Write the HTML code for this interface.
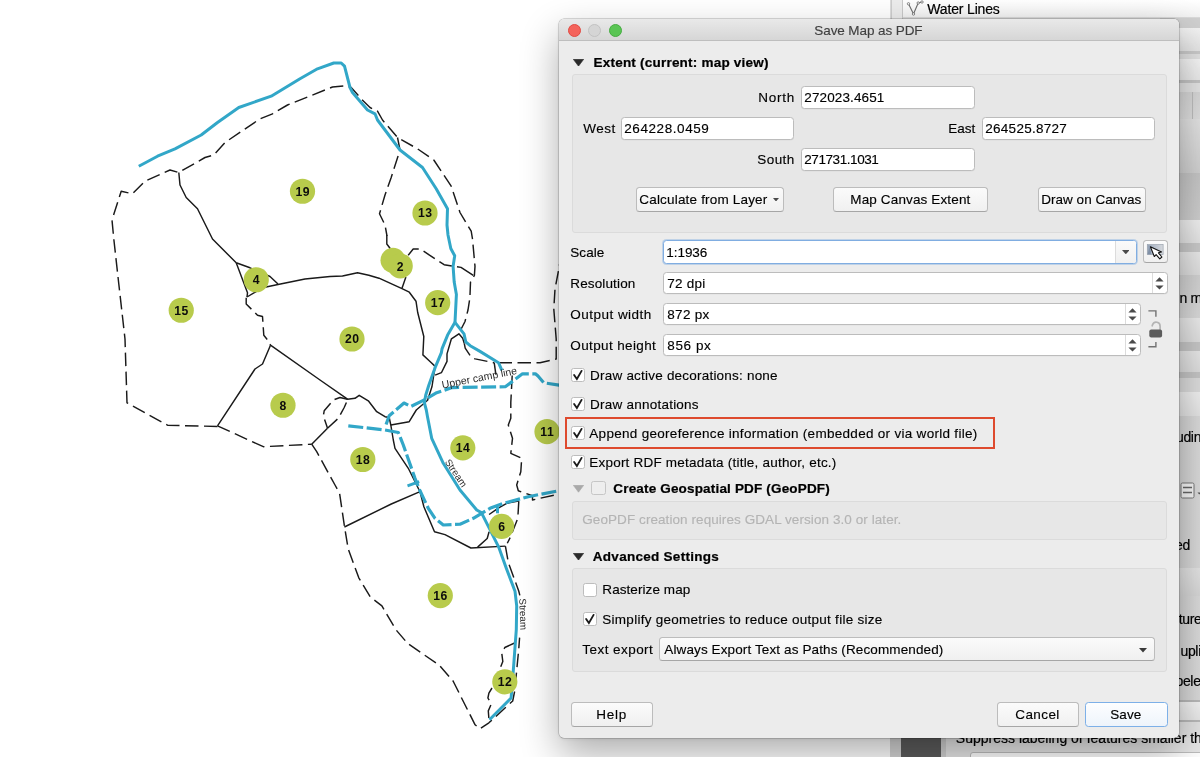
<!DOCTYPE html>
<html><head><meta charset="utf-8"><title>Save Map as PDF</title>
<style>
html,body{margin:0;padding:0;}
body{width:1200px;height:757px;overflow:hidden;background:#fff;position:relative;font-family:"Liberation Sans",sans-serif;font-size:13px;color:#1c1c1c;}
.abs{position:absolute;}
#wrap{position:absolute;left:0;top:0;width:1200px;height:757px;overflow:hidden;will-change:transform;}
.map{position:absolute;left:0;top:0;}
.bgt{position:absolute;white-space:nowrap;font-size:14px;line-height:16px;color:#000;-webkit-text-stroke-width:0.2px;}
#dlg{position:absolute;left:559px;top:19px;width:620px;height:719px;background:#ececec;border-radius:5px 5px 5px 5px;
 box-shadow:0 0 0 0.5px rgba(0,0,0,0.28), 0 16px 38px 0 rgba(0,0,0,0.32), 0 1px 4px rgba(0,0,0,0.08);}
#dlg .titlebar{position:absolute;left:0;top:0;width:620px;height:20.8px;border-radius:5px 5px 0 0;background:linear-gradient(#e9e9e9,#d6d6d6);border-bottom:1px solid #bebebe;}
#dlg .tl{position:absolute;width:11.2px;height:11.2px;border-radius:50%;border:0.5px solid;}
#dlg > *{position:absolute;}
.tx{white-space:nowrap;line-height:16px;height:16px;font-size:13.5px;color:#000;-webkit-text-stroke-width:0.14px;}
.tx[style*=bold]{-webkit-text-stroke-width:0.22px;}
.gb{box-sizing:border-box;background:#e7e7e7;border:1px solid #dbdbdb;border-radius:3px;}
.inp{box-sizing:border-box;background:#fff;border:1px solid #bcbcbc;border-radius:3.5px;box-shadow:0 0.5px 0 rgba(0,0,0,0.05);}
.inp.focus{border:1.5px solid #80ade1;box-shadow:0 0 0 1px rgba(128,173,225,0.42);}
.btn{box-sizing:border-box;background:linear-gradient(#fbfbfb,#f0f0f0);border:1px solid #bcbcbc;border-bottom-color:#a6a6a6;border-radius:3.5px;}
.btn.def{border:1.5px solid #7db0e8;background:linear-gradient(#fdfeff,#eef4fb);}
.cb{box-sizing:border-box;width:14px;height:14px;background:#fff;border:1px solid #bdbdbd;border-radius:2.5px;}
.cb.dis{background:#eeeeee;border-color:#c6c6c6;width:15px;height:14.5px;}
.cb .ck{position:absolute;left:-1px;top:-1px;width:14px;height:14px;}
.red{box-sizing:border-box;border:2.5px solid #de4a2e;background:transparent;}
.cbseg{position:absolute;right:0;top:0;bottom:0;width:20px;background:linear-gradient(#fafafa,#f0f0f0);border-radius:0 2px 2px 0;}
.cbsep{position:absolute;right:20px;top:0;bottom:0;width:1px;background:#dcdcdc;}
.spsep{position:absolute;right:13.5px;top:0;bottom:0;width:1px;background:#dcdcdc;}
</style></head>
<body><div id="wrap">
<svg class="map" width="600" height="757" viewBox="0 0 600 757">
<g fill="none" stroke="#1a1a1a" stroke-width="1.45" stroke-linejoin="round" stroke-linecap="butt">
<path d="M178.8,172.5 L180.0,185.0 L186.2,197.5 L197.5,208.8 L212.5,239.0 L236.2,262.8"/>
<path d="M236.2,262.8 L250.0,267.8 L270.0,276.5 L278.0,284.0"/>
<path d="M236.2,262.8 L247.5,292.8 L247.0,297.0"/>
<path d="M247.0,297.0 L262.5,287.8 L278.0,284.5 L305.0,279.0 L330.0,276.5 L342.5,276.0 L357.5,272.8 L368.8,275.2 L379.0,278.2 L402.0,288.7 L409.3,292.2 L416.0,301.2 L417.7,312.5 L423.8,336.5 L422.9,354.9 L430.0,361.5 L434.9,366.1"/>
<path d="M457.0,266.8 L461.0,267.4 L473.3,275.4"/>
<path d="M405.9,277.1 L402.0,288.3"/>
<path d="M386.8,235.0 L386.8,244.0 L390.2,248.5"/>
<path d="M270.5,345.2 L262.5,364.0 L255.0,369.0 L217.5,425.8"/>
<path d="M270.5,345.2 L320.0,380.0 L347.5,399.2 L355.0,398.3 L359.2,395.3 L368.3,400.8 L376.7,411.7 L385.0,416.7 L389.2,417.5 L390.8,425.0 L393.3,440.0 L395.0,448.3 L408.3,468.3 L420.0,491.7 L423.9,506.8 L434.5,531.8 L445.0,534.6 L470.9,548.0 L505.4,546.1"/>
<path d="M390.8,425.0 L409.2,421.7 L416.3,410.0 L427.6,400.3 L432.0,386.5 L434.5,370.2 L434.7,366.2"/>
<path d="M311.7,444.2 L327.5,428.3"/>
<path d="M344.4,527.0 L391.3,504.0 L420.0,491.7"/>
<path d="M477.6,547.1 L487.2,538.5 L489.1,531.8"/>
<path d="M489.1,514.5 L498.7,507.8 L506.7,503.3 L518.3,501.0"/>
<path d="M435.1,375.2 L441.4,372.7 L447.0,361.4 L447.0,353.9 L451.4,338.8 L458.9,333.8 L462.7,338.2 L464.3,343.5"/>
<path d="M494.2,362.7 L495.9,374.7"/>
</g>
<g fill="none" stroke="#1a1a1a" stroke-width="1.45" stroke-dasharray="13.5 5.5" stroke-linejoin="round">
<path d="M217.5,426.5 L167.5,425.2 L127.0,402.8 L125.0,339.0 L118.8,284.0 L113.8,239.0 L112.0,220.0 L121.2,191.2 L132.5,193.8 L145.0,181.2 L170.0,170.0 L178.8,172.5 L205.0,157.5 L213.8,155.0 L225.0,142.5 L260.0,118.8 L272.5,113.8 L287.5,105.0 L332.5,87.0 L346.2,85.8 L351.2,87.5 L361.2,98.8 L370.0,107.5 L377.5,111.2 L382.5,120.0 L397.5,137.5 L417.5,148.8 L433.8,160.0 L451.2,186.2 L460.0,212.5 L471.2,231.2 L472.5,239.0 L475.0,266.4 L474.4,275.4 L470.5,282.1 L469.9,297.9 L468.0,310.0 L465.0,321.5 L461.2,329.0"/>
<path d="M397.5,137.5 L400.0,150.0 L391.2,177.5 L385.0,195.0 L379.5,213.8 L385.0,225.0 L387.0,236.0"/>
<path d="M408.2,255.2 L413.2,249.0 L420.5,249.0 L429.5,255.2 L444.1,264.7 L455.0,266.6"/>
<path d="M246.2,297.8 L246.2,304.0 L257.5,315.2 L262.5,316.5 L263.8,335.2 L268.8,341.5 L270.5,345.2"/>
<path d="M217.5,425.8 L263.3,446.7 L311.7,444.2"/>
<path d="M327.5,428.3 L338.3,418.3 L344.2,407.5 L347.5,400.0"/>
<path d="M347.5,399.2 L340.0,397.5 L333.3,400.0 L324.2,410.8 L323.3,415.8 L326.7,425.8 L327.5,428.3"/>
<path d="M311.7,444.2 L316.7,451.7 L335.0,485.0 L339.6,493.4 L344.4,526.0 L348.2,549.0 L358.8,577.8 L370.3,596.9 L381.9,605.9 L395.8,629.6 L407.7,643.5 L439.4,665.3 L453.2,681.2 L465.1,705.0 L475.1,724.8 L480.0,728.7 L488.9,722.8 L512.7,701.0 L514.7,691.1 L518.7,649.5 L519.6,637.6"/>
<path d="M515.7,642.5 L504.8,647.5 L501.8,653.4 L502.8,661.4 L499.8,669.3"/>
<path d="M492.0,688.0 L488.9,693.1 L487.9,698.0 L491.3,704.0 L488.3,710.9 L488.9,718.8"/>
<path d="M505.4,546.1 L508.3,562.4 L518.8,591.2 L521.0,600.0"/>
<path d="M518.8,501.1 L517.8,518.3 L510.2,537.5 L507.3,543.3"/>
<path d="M512.2,375.5 L510.8,402.5 L510.8,418.3 L508.3,425.0 L512.5,438.3 L510.8,453.3 L521.7,458.3 L520.8,471.7 L516.7,485.0 L518.3,490.8 L532.5,495.8 L532.5,500.0 L558.3,494.2 L580.0,490.0"/>
<path d="M464.3,343.5 L465.2,348.2 L471.5,357.7 L475.2,358.9 L494.2,362.7"/>
<path d="M498.5,362.7 L540.0,362.8 L556.2,359.0 L556.2,339.0 L553.8,309.0 L555.0,289.0 L558.8,269.0 L560.0,262.0"/>
</g>
<g fill="none" stroke="#32a7c8" stroke-width="3" stroke-linejoin="round" stroke-linecap="butt">
<path d="M138.8,166.2 L157.5,156.2 L175.0,148.8 L201.2,135.0 L217.5,122.5 L238.8,107.5 L271.2,96.2 L300.0,78.8 L317.5,68.8 L333.8,63.0 L341.2,63.0 L344.5,66.2 L350.0,87.5 L352.5,92.5 L367.5,110.0 L375.0,113.8 L377.5,120.0 L400.0,150.0 L422.5,167.5 L436.2,188.8 L447.5,208.8 L447.0,225.0 L448.0,235.0 L450.8,248.5 L454.7,255.8 L453.1,266.4 L454.2,282.1 L456.4,294.5 L455.0,322.3"/>
<path d="M455.0,322.3 L447.6,335.1 L442.0,348.9 L441.4,352.6 L435.1,367.7 L428.8,385.3 L425.7,395.3 L424.4,402.8 L426.3,410.0 L427.5,416.7 L431.7,438.3 L443.3,463.3 L460.0,490.0 L476.7,510.0 L481.4,512.6 L489.1,527.9 L498.7,547.1 L506.3,568.2 L515.0,591.2 L516.7,605.9 L516.3,629.6 L513.7,665.3 L511.1,698.0 L489.5,719.8"/>
<path d="M455.0,322.3 L464.0,333.8 L465.8,342.0 L470.2,345.7 L480.0,351.4 L498.5,362.7 L501.9,370.4"/>
<path d="M407.5,485.8 L419.2,481.7"/>
<path d="M497.5,506.7 L497.5,513.3"/>
</g>
<g fill="none" stroke="#32a7c8" stroke-width="3.2" stroke-dasharray="15 3.5" stroke-linejoin="round">
<path d="M580.0,388.0 L559.0,385.2 L543.8,382.8 L538.0,376.0 L535.4,373.8 L522.5,373.8 L505.3,386.7 L452.1,387.6 L436.7,392.7 L425.0,399.6 L410.9,406.4 L404.0,403.0 L389.2,415.8 L385.0,427.5"/>
<path d="M348.3,425.8 L385.0,430.0 L398.3,432.5 L403.3,445.0 L415.0,478.3 L420.0,490.8 L428.3,508.3 L435.0,518.3 L443.3,525.0 L460.0,524.2 L473.3,518.3 L490.0,508.3 L503.3,503.3 L528.3,496.7 L558.3,490.8 L580.0,487.0"/>
</g>
<g font-family="Liberation Sans, sans-serif" font-size="10.5" fill="#2a2a2a">
<text transform="translate(442.5,388.5) rotate(-11)">Upper camp line</text>
<text font-size="9.7" transform="translate(444.5,462) rotate(56)">Stream</text>
<text font-size="9.8" transform="translate(519.3,598.6) rotate(88)">Stream</text>
</g>
<g fill="#b8cb4c">
<circle cx="393" cy="260.3" r="12.5"/><circle cx="400.3" cy="265.9" r="12.5"/>
<circle cx="302.5" cy="191.25" r="12.6"/>
<circle cx="425" cy="213" r="12.6"/>
<circle cx="181.25" cy="310.25" r="12.6"/>
<circle cx="256.25" cy="279.75" r="12.6"/>
<circle cx="352" cy="339" r="12.6"/>
<circle cx="283" cy="405.25" r="12.6"/>
<circle cx="437.7" cy="302.7" r="12.6"/>
<circle cx="362.8" cy="459.5" r="12.6"/>
<circle cx="462.8" cy="447.8" r="12.6"/>
<circle cx="547" cy="431.7" r="12.6"/>
<circle cx="501.6" cy="526.4" r="12.6"/>
<circle cx="440.3" cy="595.6" r="12.6"/>
<circle cx="504.8" cy="681.8" r="12.6"/>
</g>
<g font-family="Liberation Sans, sans-serif" font-size="12.2" font-weight="bold" fill="#0c0c0c" text-anchor="middle" letter-spacing="0.5">
<text x="400.5" y="270.8">2</text>
<text x="302.75" y="195.7">19</text>
<text x="425.25" y="217.4">13</text>
<text x="181.5" y="314.6">15</text>
<text x="256.5" y="284.1">4</text>
<text x="352.25" y="343.4">20</text>
<text x="283.25" y="409.6">8</text>
<text x="437.95" y="307.1">17</text>
<text x="363.05" y="463.9">18</text>
<text x="463.05" y="452.2">14</text>
<text x="547.25" y="436.1">11</text>
<text x="501.85" y="530.8">6</text>
<text x="440.55" y="600.0">16</text>
<text x="505.05" y="686.2">12</text>
</g>
</svg>
<div class="abs" style="left:890px;top:0;width:310px;height:757px;background:#dcdcdc"></div>
<div class="abs" style="left:891px;top:0;width:9.5px;height:20px;background:#ececec;border-left:1px solid #cdcdcd;border-right:1px solid #c8c8c8"></div>
<div class="abs" style="left:903px;top:0;width:297px;height:17px;background:linear-gradient(#fff,#f2f2f2);border-bottom:1px solid #d9d9d9"></div>
<svg class="abs" style="left:906px;top:0" width="18" height="17" viewBox="0 0 18 17"><path d="M2.5,3.8 L7.5,14 L12.2,3 L16,2" fill="none" stroke="#6c6c6c" stroke-width="1.1"/><circle cx="2.5" cy="3.8" r="1.2" fill="#fff" stroke="#6c6c6c" stroke-width="0.8"/><circle cx="7.5" cy="14" r="1.2" fill="#fff" stroke="#6c6c6c" stroke-width="0.8"/><circle cx="12.2" cy="3" r="1.2" fill="#fff" stroke="#6c6c6c" stroke-width="0.8"/><circle cx="16" cy="2" r="1.2" fill="#fff" stroke="#6c6c6c" stroke-width="0.8"/></svg>
<span class="bgt" id="b_wl" style="left:927.3px;top:1.1px;letter-spacing:-0.16px">Water Lines</span>
<div class="abs" style="left:1160px;top:18px;width:40px;height:10px;background:#cfcfcf"></div>
<div class="abs" style="left:1160px;top:28px;width:40px;height:23px;background:linear-gradient(#f2f2f2,#e4e4e4)"></div>
<div class="abs" style="left:1160px;top:51px;width:40px;height:3px;background:#c9c9c9"></div>
<div class="abs" style="left:1160px;top:54px;width:40px;height:5px;background:#e0e0e0"></div>
<div class="abs" style="left:1160px;top:59px;width:40px;height:21px;background:linear-gradient(#f4f4f4,#e9e9e9)"></div>
<div class="abs" style="left:1160px;top:80px;width:40px;height:3px;background:#c4c4c4"></div>
<div class="abs" style="left:1160px;top:83px;width:40px;height:9px;background:#e3e3e3"></div>
<div class="abs" style="left:1160px;top:92px;width:40px;height:27px;background:linear-gradient(#d6d6d6,#dedede)"></div>
<div class="abs" style="left:1160px;top:119px;width:40px;height:54px;background:linear-gradient(#e2e2e2,#cfcfcf)"></div>
<div class="abs" style="left:1160px;top:173px;width:40px;height:47px;background:linear-gradient(#c4c4c4,#cdcdcd)"></div>
<div class="abs" style="left:1160px;top:220px;width:40px;height:23px;background:linear-gradient(#efefef,#e2e2e2)"></div>
<div class="abs" style="left:1160px;top:243px;width:40px;height:9px;background:#c8c8c8"></div>
<div class="abs" style="left:1160px;top:252px;width:40px;height:23px;background:linear-gradient(#e8e8e8,#dcdcdc)"></div>
<div class="abs" style="left:1160px;top:275px;width:40px;height:43px;background:linear-gradient(#d0d0d0,#d8d8d8)"></div>
<div class="abs" style="left:1160px;top:318px;width:40px;height:24px;background:linear-gradient(#eaeaea,#dedede)"></div>
<div class="abs" style="left:1160px;top:342px;width:40px;height:9px;background:#c6c6c6"></div>
<div class="abs" style="left:1160px;top:351px;width:40px;height:21px;background:linear-gradient(#e6e6e6,#dcdcdc)"></div>
<div class="abs" style="left:1160px;top:372px;width:40px;height:6px;background:#c4c4c4"></div>
<div class="abs" style="left:1160px;top:378px;width:40px;height:14px;background:#dbdbdb"></div>
<div class="abs" style="left:1160px;top:392px;width:40px;height:24px;background:linear-gradient(#efefef,#e3e3e3)"></div>
<div class="abs" style="left:1160px;top:416px;width:40px;height:152px;background:linear-gradient(90deg,#cfcfcf,#d9d9d9)"></div>
<div class="abs" style="left:1160px;top:568px;width:40px;height:28px;background:linear-gradient(#e3e3e3,#d6d6d6)"></div>
<div class="abs" style="left:1160px;top:596px;width:40px;height:104px;background:linear-gradient(90deg,#d0d0d0,#dadada)"></div>
<div class="abs" style="left:1160px;top:700px;width:40px;height:2px;background:#b9b9b9"></div>
<div class="abs" style="left:1160px;top:702px;width:40px;height:18px;background:linear-gradient(#f3f3f3,#e7e7e7)"></div>
<div class="abs" style="left:1160px;top:720px;width:40px;height:2px;background:#b9b9b9"></div>
<div class="abs" style="left:1160px;top:722px;width:40px;height:35px;background:#e2e2e2"></div>
<div class="abs" style="left:1192px;top:92px;width:1px;height:27px;background:#bdbdbd"></div>
<span class="bgt" style="left:1179.5px;top:290px;letter-spacing:-0.35px">n m</span>
<span class="bgt" style="left:1176px;top:429.2px;letter-spacing:-0.35px">udin</span>
<span class="bgt" style="left:1175px;top:536.7px;letter-spacing:-0.35px">ed</span>
<span class="bgt" style="left:1178.8px;top:611.4px;letter-spacing:-0.35px">ture</span>
<span class="bgt" style="left:1180.5px;top:642.5px;letter-spacing:-0.35px">upli</span>
<span class="bgt" style="left:1175.5px;top:672.6px;letter-spacing:-0.35px">bele</span>
<svg class="abs" style="left:1180px;top:481.5px" width="21" height="18" viewBox="0 0 21 18"><rect x="1" y="1" width="13" height="15" rx="1.5" fill="#f4f4f4" stroke="#777" stroke-width="1"/><path d="M3,5.5 H12 M3,10.5 H12" stroke="#666" stroke-width="1.6"/><path d="M17.5,10.5 L21,10.5 L19.3,12.5 Z" fill="#555"/></svg>
<div class="abs" style="left:890px;top:738px;width:11px;height:19px;background:#d4d4d4"></div>
<div class="abs" style="left:901px;top:738px;width:40px;height:19px;background:#5c5c5c"></div>
<div class="abs" style="left:941px;top:738px;width:5px;height:19px;background:#d0d0d0"></div>
<div class="abs" style="left:946px;top:738px;width:254px;height:19px;background:#e6e6e6"></div>
<span class="bgt" id="b_sup" style="left:955.8px;top:729.6px;letter-spacing:0.005px">Suppress labeling of features smaller th</span>
<div class="abs" style="left:970px;top:752px;width:240px;height:10px;background:#fff;border:1px solid #bdbdbd;border-radius:3px"></div>
<div id="dlg">
<div class="titlebar"></div>
<div class="tl" style="left:8.6px;top:4.9px;background:#f4635b;border-color:#e14a42"></div>
<div class="tl" style="left:29.0px;top:4.9px;background:#d5d5d5;border-color:#c2c2c2"></div>
<div class="tl" style="left:49.8px;top:4.9px;background:#5ac554;border-color:#45ac40"></div>
<div class="gb" style="left:13px;top:55px;width:595px;height:159px;"></div>
<div class="gb" style="left:13px;top:481.5px;width:595px;height:39.0px;"></div>
<div class="gb" style="left:13px;top:548.5px;width:595px;height:104.5px;"></div>
<svg class="abs" style="left:14px;top:39.5px" width="11" height="7.5" viewBox="0 0 11 7.5"><path d="M0.3,0.3 L10.7,0.3 L5.5,7.2 Z" fill="#2a2a2a" stroke="#2a2a2a" stroke-width="0.6" stroke-linejoin="round"/></svg>
<svg class="abs" style="left:14px;top:466px" width="11" height="7.5" viewBox="0 0 11 7.5"><path d="M0.3,0.3 L10.7,0.3 L5.5,7.2 Z" fill="#a9a9a9" stroke="#a9a9a9" stroke-width="0.6" stroke-linejoin="round"/></svg>
<svg class="abs" style="left:14px;top:533.5px" width="11" height="7.5" viewBox="0 0 11 7.5"><path d="M0.3,0.3 L10.7,0.3 L5.5,7.2 Z" fill="#2a2a2a" stroke="#2a2a2a" stroke-width="0.6" stroke-linejoin="round"/></svg>
<div class="inp" style="left:242px;top:66.5px;width:174px;height:23.5px;"></div>
<div class="inp" style="left:62px;top:97.5px;width:173px;height:23.5px;"></div>
<div class="inp" style="left:423px;top:97.5px;width:173px;height:23.5px;"></div>
<div class="inp" style="left:242px;top:128.5px;width:174px;height:23.5px;"></div>
<div class="btn" style="left:77px;top:168px;width:148px;height:24.5px;"><svg class="abs" style="right:4.4px;top:9.6px" width="6" height="3.6" viewBox="0 0 6 3.6"><path d="M0,0 L6,0 L3,3.5 Z" fill="#4a4a4a"/></svg></div>
<div class="btn" style="left:274px;top:168px;width:155px;height:24.5px;"></div>
<div class="btn" style="left:479px;top:168px;width:108px;height:24.5px;"></div>
<div class="inp focus" style="left:104px;top:221px;width:474px;height:24px;"><div class="cbseg"></div><div class="cbsep"></div><svg class="abs" style="right:6.6px;top:8.6px" width="7.6" height="4.4" viewBox="0 0 7.6 4.4"><path d="M0,0 L7.6,0 L3.8,4.3 Z" fill="#4a4a4a"/></svg></div>
<div class="btn" style="left:584.3px;top:221px;width:24.40000000000009px;height:23px;overflow:hidden"><svg class="abs" style="left:0;top:0" width="24" height="23" viewBox="1144.3 241 24 23">
<defs><linearGradient id="mg" x1="0" x2="1" y1="0" y2="0"><stop offset="0" stop-color="#8e9db3"/><stop offset="0.25" stop-color="#a9b4c4"/><stop offset="1" stop-color="#d6d9dd"/></linearGradient></defs>
<rect x="1147.6" y="244.6" width="15.8" height="10" fill="url(#mg)" stroke="#9aa3ae" stroke-width="0.7"/>
<path d="M1147.9,254.3 L1150.2,246 L1151.6,254.3 Z" fill="#7f8fa6"/>
<path d="M1150.7,246.8 L1154.6,256.5 L1156.4,254.7 L1160.1,258.8 L1162.2,257 L1158.7,252.8 L1161.8,251.9 Z" fill="#fff" stroke="#111" stroke-width="1.1" stroke-linejoin="round"/></svg></div>
<div class="inp" style="left:104px;top:253px;width:504.5px;height:22px;"><div class="spsep"></div><svg class="abs" style="right:2.5px;top:3px" width="9" height="16" viewBox="0 0 9 16"><path d="M0.4,5.4 L4.5,1.2 L8.6,5.4 Z M0.4,9.4 L4.5,13.6 L8.6,9.4 Z" fill="#4a4a4a"/></svg></div>
<div class="inp" style="left:104px;top:284px;width:477.5999999999999px;height:22px;"><div class="spsep"></div><svg class="abs" style="right:2.5px;top:3px" width="9" height="16" viewBox="0 0 9 16"><path d="M0.4,5.4 L4.5,1.2 L8.6,5.4 Z M0.4,9.4 L4.5,13.6 L8.6,9.4 Z" fill="#4a4a4a"/></svg></div>
<div class="inp" style="left:104px;top:315px;width:477.5999999999999px;height:22px;"><div class="spsep"></div><svg class="abs" style="right:2.5px;top:3px" width="9" height="16" viewBox="0 0 9 16"><path d="M0.4,5.4 L4.5,1.2 L8.6,5.4 Z M0.4,9.4 L4.5,13.6 L8.6,9.4 Z" fill="#4a4a4a"/></svg></div>
<svg class="abs" style="left:587px;top:287px" width="20" height="46" viewBox="1146 306 20 46">
<path d="M1148.4,310.9 L1155.9,310.9 L1155.9,316.8" fill="none" stroke="#727272" stroke-width="1.4"/>
<path d="M1148.4,346.8 L1155.9,346.8 L1155.9,342" fill="none" stroke="#727272" stroke-width="1.4"/>
<path d="M1160.1,330 L1160.1,326.2 A3.9,3.9 0 0 0 1152.6,324.6 L1152.2,325.8" fill="none" stroke="#b4b4b4" stroke-width="1.7" stroke-linecap="round"/>
<rect x="1149.3" y="329.6" width="12.8" height="7.8" rx="2" fill="#5c5c5c"/></svg>
<div class="cb" style="left:12px;top:349px"><svg class="ck" viewBox="0 0 14 14"><path d="M3.1,6.9 L5.9,11 L10.6,2.9" fill="none" stroke="#1a1a1a" stroke-width="1.85" stroke-linecap="round" stroke-linejoin="miter"/></svg></div>
<div class="cb" style="left:12px;top:378px"><svg class="ck" viewBox="0 0 14 14"><path d="M3.1,6.9 L5.9,11 L10.6,2.9" fill="none" stroke="#1a1a1a" stroke-width="1.85" stroke-linecap="round" stroke-linejoin="miter"/></svg></div>
<div class="cb" style="left:12px;top:407px"><svg class="ck" viewBox="0 0 14 14"><path d="M3.1,6.9 L5.9,11 L10.6,2.9" fill="none" stroke="#1a1a1a" stroke-width="1.85" stroke-linecap="round" stroke-linejoin="miter"/></svg></div>
<div class="cb" style="left:12px;top:436px"><svg class="ck" viewBox="0 0 14 14"><path d="M3.1,6.9 L5.9,11 L10.6,2.9" fill="none" stroke="#1a1a1a" stroke-width="1.85" stroke-linecap="round" stroke-linejoin="miter"/></svg></div>
<div class="cb dis" style="left:32px;top:461.5px"></div>
<div class="cb" style="left:24px;top:564px"></div>
<div class="cb" style="left:24px;top:593px"><svg class="ck" viewBox="0 0 14 14"><path d="M3.1,6.9 L5.9,11 L10.6,2.9" fill="none" stroke="#1a1a1a" stroke-width="1.85" stroke-linecap="round" stroke-linejoin="miter"/></svg></div>
<div class="red" style="left:6px;top:398.2px;width:430px;height:31.900000000000034px;"></div>
<div class="btn" style="left:100px;top:618px;width:496px;height:24px;"><svg class="abs" style="right:7px;top:10px" width="8" height="5" viewBox="0 0 8 5"><path d="M0,0 L8,0 L4,4.6 Z" fill="#3a3a3a"/></svg></div>
<div class="btn" style="left:11.5px;top:683.3px;width:82.0px;height:24.5px;"></div>
<div class="btn" style="left:437.5px;top:683.3px;width:82.5px;height:24.5px;"></div>
<div class="btn def" style="left:526px;top:683.3px;width:82.5px;height:24.5px;"></div>
<span class="tx" id="t_title" style="left:255.3px;top:4.199999999999999px;letter-spacing:-0.090px;color:#3f3f3f;">Save Map as PDF</span>
<span class="tx" id="t_extent" style="left:34.5px;top:36px;letter-spacing:0.218px;font-weight:bold;">Extent (current: map view)</span>
<span class="tx" id="t_north" style="left:199.3px;top:71px;letter-spacing:0.745px;">North</span>
<span class="tx" id="t_northv" style="left:245.3px;top:71px;letter-spacing:0.116px;">272023.4651</span>
<span class="tx" id="t_west" style="left:24.3px;top:102px;letter-spacing:0.496px;">West</span>
<span class="tx" id="t_westv" style="left:65.3px;top:102px;letter-spacing:0.566px;">264228.0459</span>
<span class="tx" id="t_east" style="left:389.3px;top:102px;letter-spacing:-0.009px;">East</span>
<span class="tx" id="t_eastv" style="left:426.3px;top:102px;letter-spacing:0.266px;">264525.8727</span>
<span class="tx" id="t_south" style="left:198.3px;top:133px;letter-spacing:0.430px;">South</span>
<span class="tx" id="t_southv" style="left:245.3px;top:133px;letter-spacing:-0.434px;">271731.1031</span>
<span class="tx" id="t_calc" style="left:80.3px;top:173px;letter-spacing:0.181px;">Calculate from Layer</span>
<span class="tx" id="t_mapc" style="left:291.3px;top:173px;letter-spacing:0.137px;">Map Canvas Extent</span>
<span class="tx" id="t_draw" style="left:482.3px;top:173px;letter-spacing:0.015px;">Draw on Canvas</span>
<span class="tx" id="t_scale" style="left:11.3px;top:225.5px;letter-spacing:0.056px;">Scale</span>
<span class="tx" id="t_scalev" style="left:107.3px;top:225.5px;letter-spacing:-0.059px;">1:1936</span>
<span class="tx" id="t_res" style="left:11.3px;top:257px;letter-spacing:0.134px;">Resolution</span>
<span class="tx" id="t_resv" style="left:108.3px;top:257px;letter-spacing:0.242px;">72 dpi</span>
<span class="tx" id="t_ow" style="left:11.3px;top:288px;letter-spacing:0.472px;">Output width</span>
<span class="tx" id="t_owv" style="left:108.3px;top:288px;letter-spacing:0.292px;">872 px</span>
<span class="tx" id="t_oh" style="left:11.3px;top:319px;letter-spacing:0.370px;">Output height</span>
<span class="tx" id="t_ohv" style="left:108.3px;top:319px;letter-spacing:0.592px;">856 px</span>
<span class="tx" id="t_c1" style="left:31.1px;top:348.5px;letter-spacing:0.211px;">Draw active decorations: none</span>
<span class="tx" id="t_c2" style="left:31.1px;top:377.5px;letter-spacing:0.229px;">Draw annotations</span>
<span class="tx" id="t_c3" style="left:30.3px;top:406.5px;letter-spacing:0.293px;">Append georeference information (embedded or via world file)</span>
<span class="tx" id="t_c4" style="left:30.3px;top:435.5px;letter-spacing:0.210px;">Export RDF metadata (title, author, etc.)</span>
<span class="tx" id="t_geo" style="left:54.3px;top:461.5px;letter-spacing:0.170px;font-weight:bold;">Create Geospatial PDF (GeoPDF)</span>
<span class="tx" id="t_geomsg" style="left:23.3px;top:493.4px;letter-spacing:0.072px;color:#b4b4b4;">GeoPDF creation requires GDAL version 3.0 or later.</span>
<span class="tx" id="t_adv" style="left:33.8px;top:529.6px;letter-spacing:0.279px;font-weight:bold;">Advanced Settings</span>
<span class="tx" id="t_rast" style="left:43.3px;top:563.1px;letter-spacing:0.080px;">Rasterize map</span>
<span class="tx" id="t_simp" style="left:43.3px;top:592.5px;letter-spacing:0.269px;">Simplify geometries to reduce output file size</span>
<span class="tx" id="t_te" style="left:23.3px;top:622.6px;letter-spacing:0.446px;">Text export</span>
<span class="tx" id="t_tev" style="left:105.3px;top:622.6px;letter-spacing:0.116px;">Always Export Text as Paths (Recommended)</span>
<span class="tx" id="t_help" style="left:37.3px;top:688.4px;letter-spacing:0.741px;">Help</span>
<span class="tx" id="t_cancel" style="left:456.3px;top:688.4px;letter-spacing:0.393px;">Cancel</span>
<span class="tx" id="t_save" style="left:551.3px;top:688.4px;letter-spacing:0.073px;">Save</span>
</div>
</div></body></html>
